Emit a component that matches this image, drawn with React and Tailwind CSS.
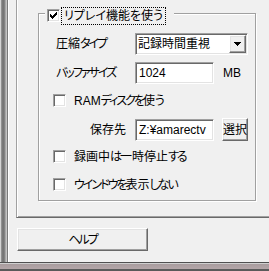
import React from "react";

const sunken =
  "border border-t-[#a0a0a0] border-l-[#a0a0a0] border-r-white border-b-white shadow-[inset_1px_1px_0_#696969,inset_-1px_-1px_0_#e3e3e3]";
const raised =
  "border border-t-white border-l-white border-r-[#696969] border-b-[#696969] shadow-[inset_-1px_-1px_0_#a0a0a0,inset_1px_1px_0_#e3e3e3] bg-[#f0f0f0]";

// kana runs are narrower in the original UI font
function T({ text }) {
  return (
    <span className="leading-none">
      {text.split(/([\u3040-\u30ff]+)/).map((part, i) =>
        /[\u3040-\u30ff]/.test(part) ? (
          <span key={i} className="tracking-[-2px]">
            {part}
          </span>
        ) : (
          part
        )
      )}
    </span>
  );
}

function Box({ checked }) {
  return (
    <span className={`flex h-[13px] w-[13px] shrink-0 items-center justify-center bg-white ${sunken}`}>
      {checked && (
        <svg width="7" height="7" viewBox="0 0 7 7" shapeRendering="crispEdges">
          <path
            d="M6 0h1v1h-1zM5 1h2v1h-2zM0 2h1v1h-1zM4 2h3v1h-3zM0 3h2v1h-2zM3 3h3v1h-3zM0 4h5v1h-5zM1 5h3v1h-3zM2 6h1v1h-1z"
            fill="#000"
          />
        </svg>
      )}
    </span>
  );
}

function Check({ label, className = "" }) {
  return (
    <div className={`flex h-[13px] items-center gap-[8px] pl-[14px] ${className}`}>
      <Box />
      <T text={label} />
    </div>
  );
}

export default function App() {
  return (
    <div className="flex h-[271px] w-[269px] flex-col overflow-hidden bg-[#f0f0f0] font-['Liberation_Sans','Noto_Sans_CJK_JP',sans-serif] text-[12px] text-black [font-feature-settings:'palt']">
      <div className="flex h-[262px]">
        <div className="w-[9px] shrink-0 bg-[linear-gradient(to_right,#d4d4d4_0,#d4d4d4_1px,#9c9c9c_1px,#6f6f6f_3px,#8a8a8a_5px,#c4c4c4_6px,#c4c4c4_7px,#7a7a7a_7px,#7a7a7a_8px,#ffffff_8px)]" />
        <div className="flex flex-1 flex-col">
          {/* tab panel */}
          <div className="ml-[7px] h-[218px] border-b border-l border-b-[#696969] border-l-[#a0a0a0] pt-[13px] shadow-[inset_1px_0_0_#fff,inset_0_-1px_0_#a0a0a0]">
            {/* group box */}
            <div className="relative ml-[21px] h-[188px] w-[218px] border border-[#a0a0a0] pt-[19px] shadow-[1px_1px_0_#fff,inset_1px_1px_0_#fff]">
              <div className="absolute left-[6px] top-[-8px] flex h-[19px] items-center bg-[#f0f0f0] pl-[2px] pr-[8px]">
                <Box checked />
                <span className="ml-[1px] flex h-[18px] items-center border border-dotted border-black px-[2px] leading-none">
                  リプレイ機能を使う
                </span>
              </div>

              <div className="flex h-[22px] items-center">
                <span className="w-[96px] shrink-0 pl-[17px]">
                  <T text="圧縮タイプ" />
                </span>
                <div className={`flex h-[22px] w-[113px] items-center bg-white pl-[2px] ${sunken}`}>
                  <span className="leading-none">記録時間重視</span>
                  <span className={`ml-auto mr-[1px] flex h-[18px] w-[17px] items-center justify-center ${raised}`}>
                    <svg width="7" height="4" viewBox="0 0 7 4" shapeRendering="crispEdges">
                      <path d="M0 0h7v1h-7zM1 1h5v1h-5zM2 2h3v1h-3zM3 3h1v1h-1z" fill="#000" />
                    </svg>
                  </span>
                </div>
              </div>

              <div className="mt-[7px] flex h-[22px] items-center">
                <span className="w-[96px] shrink-0 pl-[17px]">
                  <T text="バッファサイズ" />
                </span>
                <div className={`flex h-[22px] w-[79px] items-center bg-white pl-[3px] ${sunken}`}>
                  <span className="leading-none">1024</span>
                </div>
                <span className="ml-[9px] leading-none">MB</span>
              </div>

              <Check label="RAMディスクを使う" className="mt-[10px]" />

              <div className="mt-[11px] flex h-[23px] items-center">
                <span className="w-[96px] shrink-0 pr-[9px] text-right leading-none">保存先</span>
                <div className={`flex h-[22px] w-[79px] items-center bg-white pl-[3px] ${sunken}`}>
                  <span className="leading-none">Z:¥amarectv</span>
                </div>
                <button className={`ml-[8px] flex h-[23px] w-[26px] items-center justify-center leading-none ${raised}`}>
                  選択
                </button>
              </div>

              <Check label="録画中は一時停止する" className="mt-[9px]" />
              <Check label="ウインドウを表示しない" className="mt-[15px]" />
            </div>
          </div>

          <button className={`ml-[8px] mt-[10px] flex h-[23px] w-[131px] items-center justify-center ${raised}`}>
            <T text="ヘルプ" />
          </button>
        </div>
      </div>
      <div className="h-[9px] shrink-0 bg-[linear-gradient(to_bottom,#505050_0,#505050_1px,#cfcfcf_1px,#cfcfcf_2px,#a89c9e_2px,#b4a6a8_7px,#5a5a5a_7px)]" />
    </div>
  );
}
